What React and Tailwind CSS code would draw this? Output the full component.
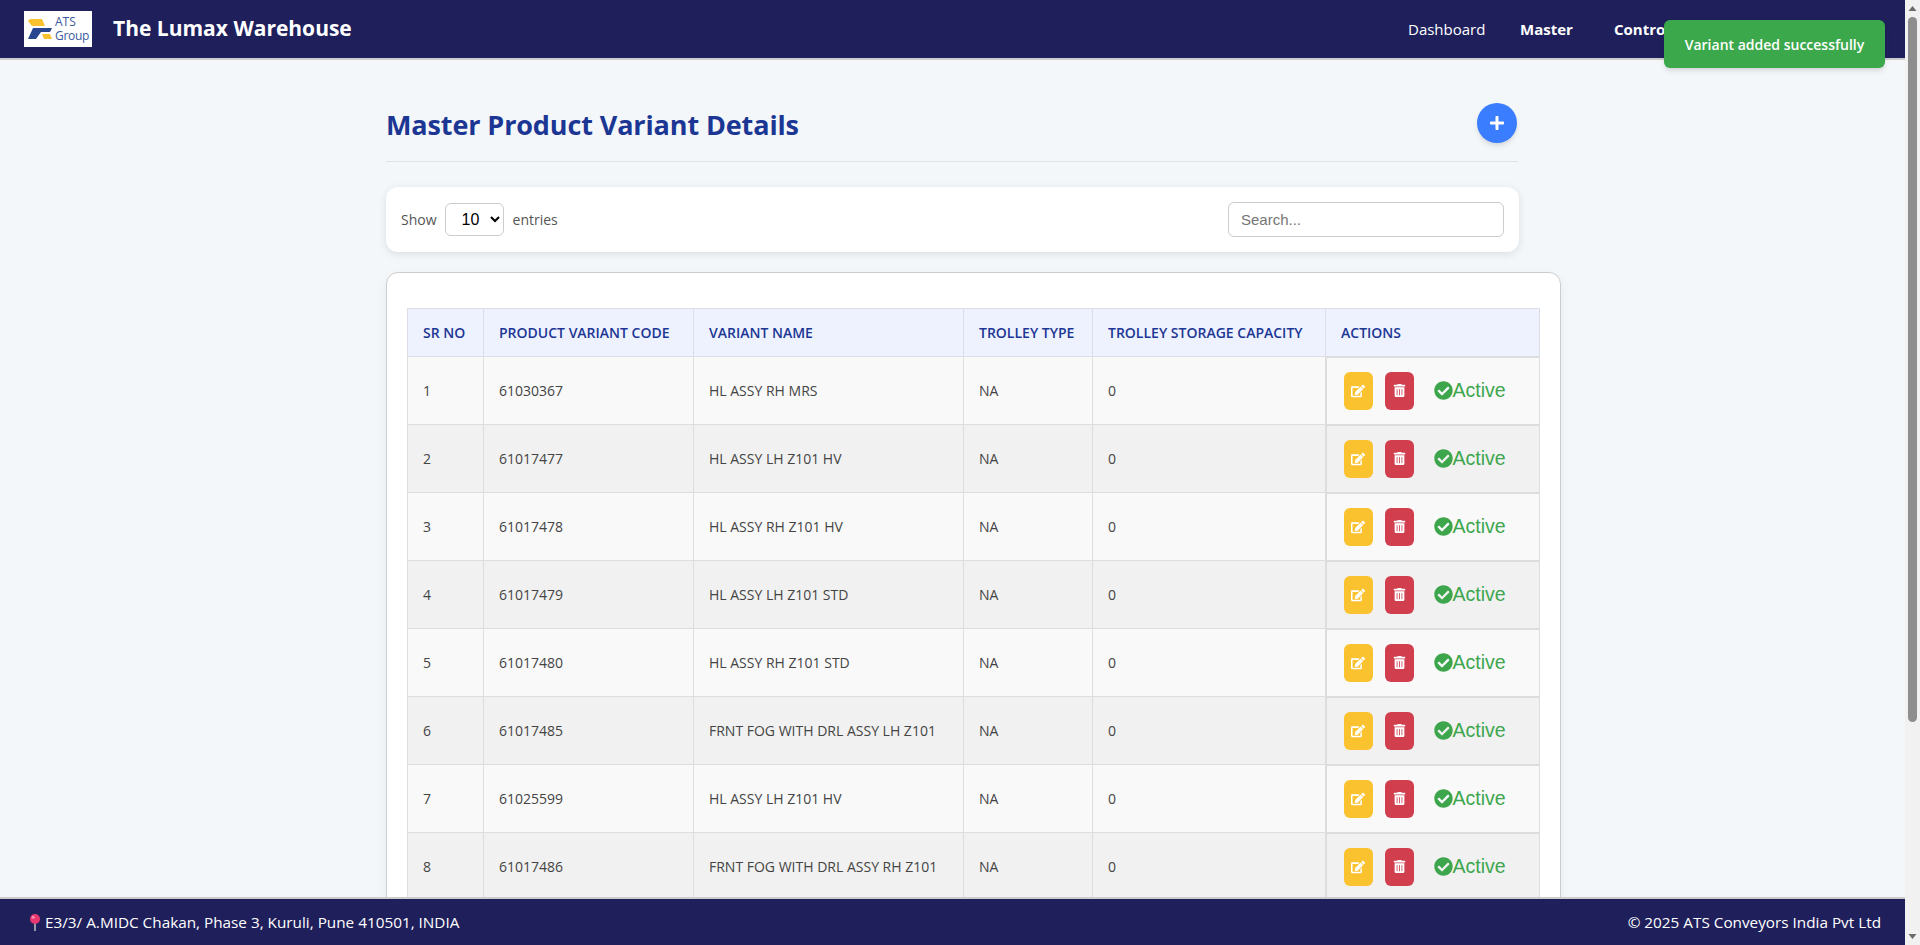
import { FaCheckCircle, FaEdit, FaPlus, FaTrashAlt } from "react-icons/fa";

const rows = [
  ["1", "61030367", "HL ASSY RH MRS"],
  ["2", "61017477", "HL ASSY LH Z101 HV"],
  ["3", "61017478", "HL ASSY RH Z101 HV"],
  ["4", "61017479", "HL ASSY LH Z101 STD"],
  ["5", "61017480", "HL ASSY RH Z101 STD"],
  ["6", "61017485", "FRNT FOG WITH DRL ASSY LH Z101"],
  ["7", "61025599", "HL ASSY LH Z101 HV"],
  ["8", "61017486", "FRNT FOG WITH DRL ASSY RH Z101"],
];

const headers = ["SR NO", "PRODUCT VARIANT CODE", "VARIANT NAME", "TROLLEY TYPE", "TROLLEY STORAGE CAPACITY", "ACTIONS"];
const cellClass = "border border-[#dddddd] px-[15px] text-[14px] text-[#444444]";

const Logo = () => (
  <div className="flex h-9 w-[68px] items-center bg-white pl-1">
    <svg width="24" height="20" viewBox="0 0 24 20" className="shrink-0">
      <path d="M0 2 2 0h12l3 7H4z" fill="#f9c22e" />
      <path d="M5 9h19l-2 4h-9l-5 7H0z" fill="#27468f" />
      <path d="M14 15h8l2 5h-8z" fill="#f9c22e" />
    </svg>
    <div className="ml-[3px] text-[12px] leading-[14px] text-[#3a5a9c]">
      <div className="font-medium">ATS</div>
      <div className="font-medium tracking-[-0.3px]">Group</div>
    </div>
  </div>
);

const Pin = () => (
  <svg width="14" height="18" viewBox="0 0 14 18" className="mr-[3px] shrink-0">
    <rect x="6" y="9" width="2" height="9" fill="#9a9aa8" />
    <circle cx="7" cy="6" r="5" fill="#e8386f" />
    <circle cx="5.2" cy="4.2" r="1.5" fill="#f58fb0" />
  </svg>
);

const Scrollbar = () => (
  <div className="flex w-[15px] shrink-0 flex-col items-center bg-[#f1f1f1]">
    <svg width="15" height="17" viewBox="0 0 15 17" className="shrink-0">
      <path d="M3.5 11 7.5 6l4 5z" fill="#6b6b6b" />
    </svg>
    <div className="h-[705px] w-[9px] shrink-0 rounded-full bg-[#8d8d8d]" />
    <div className="flex-1" />
    <svg width="15" height="17" viewBox="0 0 15 17" className="shrink-0">
      <path d="M3.5 6 7.5 11l4-5z" fill="#6b6b6b" />
    </svg>
  </div>
);

const App = () => {
  return (
    <div className="relative flex h-screen overflow-hidden bg-[#f4f7fa] font-['Open_Sans',sans-serif]">
      <div className="flex min-w-0 flex-1 flex-col">
        <header className="flex h-[60px] shrink-0 items-center border-b-2 border-[#cccccc] bg-[#1f1f5c] pl-6 text-white">
          <Logo />
          <h1 className="ml-[21px] text-[21px] font-bold">The Lumax Warehouse</h1>
          <nav className="ml-auto flex w-[497px] text-[15px]">
            <span className="w-[112px]">Dashboard</span>
            <span className="w-[94px] font-bold">Master</span>
            <span className="font-bold">Control</span>
          </nav>
        </header>

        <main className="min-h-0 flex-1 overflow-hidden">
          <div className="mx-auto w-[1133px]">
            <div className="flex h-[102px] w-[1132px] items-center justify-between border-b border-[#dfe3e8] pt-[34px] pb-[10px]">
              <h2 className="mt-[5px] text-[27px] font-bold tracking-[-0.12px] text-[#1c3694]">Master Product Variant Details</h2>
              <button className="mr-px flex h-10 w-10 items-center justify-center rounded-full bg-[#3b7dff] text-white shadow-md">
                <FaPlus size={16} />
              </button>
            </div>

            <div className="mt-[25px] flex h-[65px] items-center justify-between rounded-xl bg-white pr-[15px] pl-[15px] shadow-[0_2px_8px_rgba(0,0,0,0.1)]">
              <div className="flex items-center text-[14px] text-[#555555]">
                <span>Show</span>
                <select className="mr-[9px] ml-2 h-[33px] w-[59px] rounded-md border border-[#cccccc] bg-white pl-3 font-['Liberation_Sans',sans-serif] text-[16px] text-black">
                  <option>10</option>
                </select>
                <span>entries</span>
              </div>
              <input
                placeholder="Search..."
                className="h-[35px] w-[276px] rounded-md border border-[#cccccc] bg-white px-3 font-['Liberation_Sans',sans-serif] text-[15px] placeholder:text-[#757575]"
              />
            </div>

            <div className="mt-5 w-[1175px] rounded-xl border border-[#cccccc] bg-white pt-[35px] pr-[20px] pb-5 pl-5 shadow-[0_4px_12px_rgba(0,0,0,0.05)]">
              <table className="w-[1132px] table-fixed border-collapse">
                <colgroup>
                  <col className="w-[76px]" />
                  <col className="w-[210px]" />
                  <col className="w-[270px]" />
                  <col className="w-[129px]" />
                  <col className="w-[233px]" />
                  <col className="w-[214px]" />
                </colgroup>
                <thead>
                  <tr className="h-[48px] bg-[#eef2ff]">
                    {headers.map((h) => (
                      <th key={h} className="border border-[#dddde8] px-[15px] text-left text-[14px] font-semibold whitespace-nowrap text-[#1c3694]">
                        {h}
                      </th>
                    ))}
                  </tr>
                </thead>
                <tbody>
                  {rows.map((r, i) => (
                    <tr key={r[0]} className={i % 2 === 0 ? "h-[68px] bg-[#f9f9f9]" : "h-[68px] bg-[#f1f1f1]"}>
                      <td className={cellClass}>{r[0]}</td>
                      <td className={cellClass}>{r[1]}</td>
                      <td className={cellClass + " whitespace-nowrap"}>{r[2]}</td>
                      <td className={cellClass}>NA</td>
                      <td className={cellClass}>0</td>
                      <td className="border-y-2 border-r border-l-2 border-[#dddddd] pl-[17px]">
                        <div className="flex items-center">
                          <button className="flex h-[38px] w-[29px] items-center justify-center rounded-md bg-[#f9c22e] text-white">
                            <FaEdit size={14} />
                          </button>
                          <button className="ml-3 flex h-[38px] w-[29px] items-center justify-center rounded-md bg-[#d13f4e] text-white">
                            <FaTrashAlt size={13} />
                          </button>
                          <span className="ml-5 flex items-center font-['Liberation_Sans',sans-serif] text-[19.5px] text-[#3da64d]">
                            <FaCheckCircle size={19} />
                            Active
                          </span>
                        </div>
                      </td>
                    </tr>
                  ))}
                </tbody>
              </table>
            </div>
          </div>
        </main>

        <footer className="flex h-12 shrink-0 items-center justify-between border-t-2 border-[#cccccc] bg-[#1f1f5c] pr-6 pl-[28px] text-[15.3px] text-white">
          <div className="flex items-center">
            <Pin />
            <span>E3/3/ A.MIDC Chakan, Phase 3, Kuruli, Pune 410501, INDIA</span>
          </div>
          <span>© 2025 ATS Conveyors India Pvt Ltd</span>
        </footer>
      </div>

      <Scrollbar />

      <div className="absolute top-5 right-[35px] flex h-[48px] w-[221px] items-center justify-center rounded-md bg-[#3ca84c] text-[14px] font-semibold text-white shadow-md">
        Variant added successfully
      </div>
    </div>
  );
};

export default App;
